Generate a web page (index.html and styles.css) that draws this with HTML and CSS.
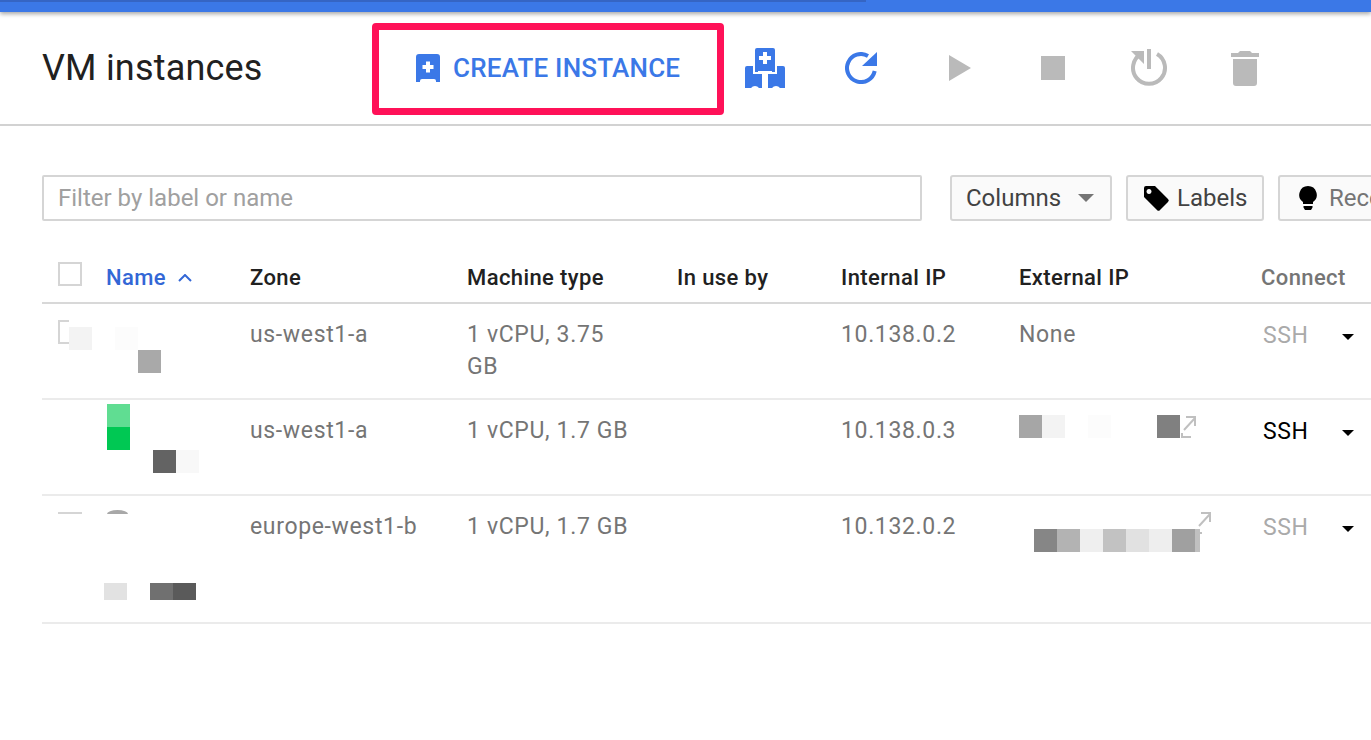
FILE: index.html
```html
<!DOCTYPE html>
<html lang="en">
<head>
    <meta charset="UTF-8">
    <title>VM instances</title>
    <link rel="stylesheet" href="styles.css">
</head>
<body>
    <div class="topbar"><div class="topbar-dark"></div></div>
    <div class="toolbar">
        <h1>VM instances</h1>
        <div class="create-box">
            <svg class="create-icon" viewBox="0 0 24 28"><path fill="#3b78e7" d="M3 0h18a3 3 0 0 1 3 3v25h-4v-1a2 2 0 0 0-2-2H6a2 2 0 0 0-2 2v1H0V3a3 3 0 0 1 3-3z"/><path fill="#fff" d="M10 7.500h4V11h3.500v4H14v3.500h-4V15H6.500v-4H10z"/></svg>
            <span>CREATE INSTANCE</span>
        </div>
        <div class="tools">
            <div class="tool"><svg width="40" height="40" viewBox="0 0 40 40"><path fill="#3b78e7" d="M2 18h6v8h9v14h-3a5 5 0 0 0-8 0H0V20a2 2 0 0 1 2-2zM32 18h6a2 2 0 0 1 2 2v20h-5a5 5 0 0 0-8 0h-4V26h9z"/><path fill="#3b78e7" d="M12 0h16a2 2 0 0 1 2 2v22h-3v-1H13v1h-3V2a2 2 0 0 1 2-2z"/><path fill="#fff" d="M18 4h4v4h4v4h-4v4h-4v-4h-4V8h4z"/></svg></div>
            <div class="tool"><svg width="32" height="32" viewBox="0 0 32 32"><path fill="none" stroke="#3b78e7" stroke-width="4" d="M29.700 19A14 14 0 1 1 23 3.900"/><path fill="#3b78e7" d="M32 0v14H17z"/></svg></div>
            <div class="tool tool-play"><svg width="22" height="26" viewBox="0 0 22 26"><path fill="#bababa" d="M0 0l22 13L0 26z"/></svg></div>
            <div class="tool"><svg width="24" height="24" viewBox="0 0 24 24"><path fill="#bababa" d="M0 0h24v24H0z"/></svg></div>
            <div class="tool"><svg width="38" height="38" viewBox="0 0 38 38"><path fill="none" stroke="#bababa" stroke-width="4" d="M27 5A16 16 0 1 1 11 5"/><path fill="#bababa" d="M17 0h4v20h-4zM1 2h13v13z"/></svg></div>
            <div class="tool"><svg width="28" height="35" viewBox="0 0 28 35"><path fill="#bababa" d="M0 2h7l2-2h10l2 2h7v4H0zM2 8h24v24a3 3 0 0 1-3 3H5a3 3 0 0 1-3-3z"/></svg></div>
        </div>
    </div>

    <div class="filter-row">
        <div class="filter-input">Filter by label or name</div>
        <div class="btn btn-columns">Columns <span class="caret caret-grey"></span></div>
        <div class="btn btn-labels">
            <svg width="28" height="28" viewBox="0 0 28 28"><path d="M2 4a2 2 0 0 1 2-2h9l13 13a2 2 0 0 1 0 3l-8 8a2 2 0 0 1-3 0L2 13zM7 5a2.500 2.500 0 1 0 .01 0z" fill-rule="evenodd"/></svg>
            Labels
        </div>
        <div class="btn btn-rec">
            <svg width="18" height="24" viewBox="0 0 18 24"><path d="M9 0a8.800 8.800 0 0 0-5 16v2h10v-2A8.800 8.800 0 0 0 9 0zM4.500 20h9v1.500l-1.500 2.500H6l-1.500-2.500z"/></svg>
            Recommendations
        </div>
    </div>

    <table class="vm-table">
        <thead>
            <tr>
                <th class="col-check"><span class="checkbox"></span></th>
                <th class="col-name sorted">Name <svg class="sort-icon" width="14" height="8" viewBox="0 0 14 8"><path fill="none" stroke="#3367d6" stroke-width="2" d="M1 7l6-6 6 6"/></svg></th>
                <th class="col-zone">Zone</th>
                <th class="col-type">Machine type</th>
                <th class="col-use">In use by</th>
                <th class="col-int">Internal IP</th>
                <th class="col-ext">External IP</th>
                <th class="col-conn muted">Connect</th>
            </tr>
        </thead>
        <tbody>
            <tr class="row-a">
                <td>
                    <span class="box-part"></span>
                    <div class="strip s1"><i class="g-f3"></i><i></i><i class="g-fc"></i></div>
                    <div class="strip s2"><i class="g-a9"></i></div>
                </td>
                <td></td>
                <td>us-west1-a</td>
                <td>1 vCPU, 3.75<br>GB</td>
                <td></td>
                <td>10.138.0.2</td>
                <td>None</td>
                <td class="ssh off">SSH<span class="caret"></span></td>
            </tr>
            <tr class="row-a">
                <td>
                    <div class="strip s3"><i class="g-green1"></i></div>
                    <div class="strip s4"><i class="g-green2"></i></div>
                    <div class="strip s5"><i class="g-63"></i><i class="g-f8"></i></div>
                </td>
                <td></td>
                <td>us-west1-a</td>
                <td>1 vCPU, 1.7 GB</td>
                <td></td>
                <td>10.138.0.3</td>
                <td>
                    <div class="strip s6"><i class="g-a6"></i><i class="g-f3"></i><i></i><i class="g-fc"></i><i></i><i></i><i class="g-80"></i></div>
                    <svg class="ext-link ext-a" width="15" height="22" viewBox="0 0 15 22"><path fill="none" stroke="#c0c0c0" stroke-width="2" d="M3 14L14 2M5 1h9v9M1 17v4h9"/></svg>
                </td>
                <td class="ssh">SSH<span class="caret"></span></td>
            </tr>
            <tr class="row-b">
                <td>
                    <span class="box-top"></span>
                    <span class="dot-top"></span>
                    <div class="strip s7"><i class="g-e2"></i><i></i><i class="g-70"></i><i class="g-5a"></i></div>
                </td>
                <td></td>
                <td>europe-west1-b</td>
                <td>1 vCPU, 1.7 GB</td>
                <td></td>
                <td>10.132.0.2</td>
                <td>
                    <div class="strip s8"><i class="g-86"></i><i class="g-b3"></i><i class="g-ef"></i><i class="g-c2"></i><i class="g-e1"></i><i class="g-ee"></i><i class="g-a0"></i><i class="g-c0 sliver"></i></div>
                    <svg class="ext-link ext-b" width="15" height="22" viewBox="0 0 15 22"><path fill="none" stroke="#c0c0c0" stroke-width="2" d="M3 14L14 2M5 1h9v9M1 17v4h5"/></svg>
                </td>
                <td class="ssh off">SSH<span class="caret"></span></td>
            </tr>
        </tbody>
    </table>
</body>
</html>
```

FILE: styles.css
```css
html, body {
    margin: 0;
    height: 740px;
    overflow: hidden;
    background: #fff;
    font-family: Roboto, "Liberation Sans", sans-serif;
}
.topbar {
    height: 12px;
    background: #3b78e7;
    box-shadow: 0 2px 4px rgba(0, 0, 0, 0.35);
}
.topbar-dark {
    width: 866px;
    height: 2px;
    background: #3565c4;
}
.toolbar {
    display: flex;
    align-items: center;
    height: 112px;
    padding-left: 42px;
    border-bottom: 2px solid #d2d2d2;
}
h1 {
    width: 330px;
    margin: 0;
    font-size: 36px;
    font-weight: 400;
    letter-spacing: 0.2px;
    color: #212121;
}
.create-box {
    display: flex;
    flex-shrink: 0;
    align-items: center;
    box-sizing: border-box;
    width: 352px;
    height: 92px;
    margin-top: 2px;
    padding: 0 0 2px 37px;
    border: 7px solid #ff1158;
    border-radius: 4px;
    color: #3b78e7;
    font-size: 26px;
    font-weight: 500;
    letter-spacing: 0.2px;
}
.create-icon {
    width: 24px;
    height: 28px;
    margin-right: 13px;
}
.tools {
    display: flex;
    margin-left: -7px;
}
.tool {
    display: flex;
    flex-shrink: 0;
    justify-content: center;
    align-items: center;
    width: 96px;
}
.tool-play {
    padding-left: 6px;
    box-sizing: border-box;
}
.filter-row {
    display: flex;
    margin: 49px 0 0 42px;
    height: 46px;
    font-size: 24px;
}
.filter-input {
    flex-shrink: 0;
    box-sizing: border-box;
    width: 880px;
    margin-right: 28px;
    padding: 0 14px;
    border: 2px solid #d5d5d5;
    border-radius: 2px;
    line-height: 42px;
    color: #a0a0a0;
}
.btn {
    display: flex;
    flex-shrink: 0;
    align-items: center;
    box-sizing: border-box;
    margin-right: 14px;
    border: 2px solid #d5d5d5;
    border-radius: 3px;
    background: #fafafa;
    color: #424242;
}
.btn-columns {
    width: 162px;
    padding-left: 14px;
}
.btn-labels {
    width: 138px;
    padding-left: 14px;
}
.btn-labels svg {
    margin-right: 7px;
}
.btn-rec {
    width: 300px;
    padding-left: 19px;
    color: #757575;
}
.btn-rec svg {
    margin-right: 12px;
}
.caret {
    display: inline-block;
    border-left: 6px solid transparent;
    border-right: 6px solid transparent;
    border-top: 6px solid #000;
}
.caret-grey {
    margin-left: 17px;
    border-left-width: 8px;
    border-right-width: 8px;
    border-top-width: 8px;
    border-top-color: #757575;
}
.vm-table {
    width: 1329px;
    margin: 33px 0 0 42px;
    border-collapse: separate;
    border-spacing: 0;
    table-layout: fixed;
    font-size: 23px;
    letter-spacing: 0.65px;
}
th {
    height: 46px;
    padding: 0 0 2px;
    border-bottom: 2px solid #d8d8d8;
    text-align: left;
    font-size: 22px;
    font-weight: 500;
    letter-spacing: 0.4px;
    color: #212121;
}
td {
    position: relative;
    padding: 15px 0 0;
    border-bottom: 2px solid #ebebeb;
    vertical-align: top;
    line-height: 32px;
    color: #757575;
}
.row-a td {
    height: 79px;
}
.row-b td {
    height: 111px;
}
.col-check { width: 64px; }
.col-name { width: 144px; }
.col-zone { width: 217px; }
.col-type { width: 210px; }
.col-use { width: 164px; }
.col-int { width: 178px; }
.col-ext { width: 242px; }
th.sorted {
    color: #3367d6;
}
th.muted {
    color: #757575;
}
.sort-icon {
    margin: 0 0 3px 6px;
}
.checkbox {
    display: block;
    box-sizing: border-box;
    width: 24px;
    height: 24px;
    margin: 0 0 6px 16px;
    border: 2px solid #d5d5d5;
}
.box-part {
    position: absolute;
    left: 16px;
    top: 16px;
    box-sizing: border-box;
    width: 11px;
    height: 24px;
    border: 2px solid #d5d5d5;
    border-right: 0;
}
.box-top {
    position: absolute;
    left: 16px;
    top: 16px;
    width: 24px;
    height: 2px;
    background: #d5d5d5;
}
.dot-top {
    position: absolute;
    left: 65px;
    top: 14px;
    width: 21px;
    height: 4px;
    border-radius: 50% 50% 0 0 / 100% 100% 0 0;
    background: #a8a8a8;
}
.strip {
    position: absolute;
    display: flex;
}
.strip i {
    display: block;
    width: 23px;
    height: 23px;
}
.strip i.sliver {
    width: 5px;
}
.s1 { left: 27px; top: 23px; }
.s2 { left: 96px; top: 46px; }
.s3 { left: 65px; top: 4px; }
.s4 { left: 65px; top: 27px; }
.s5 { left: 111px; top: 50px; }
.s6 { left: 0; top: 15px; }
.s7 { left: 62px; top: 87px; }
.s7 i { height: 17px; }
.s8 { left: 15px; top: 33px; }
.g-f3 { background: #f3f3f3; }
.g-fc { background: #fcfcfc; }
.g-a9 { background: #a9a9a9; }
.g-green1 { background: #60dd92; }
.g-green2 { background: #00c853; }
.g-63 { background: #636363; }
.g-f8 { background: #f8f8f8; }
.g-a6 { background: #a6a6a6; }
.g-80 { background: #808080; }
.g-e2 { background: #e2e2e2; }
.g-70 { background: #707070; }
.g-5a { background: #5a5a5a; }
.g-86 { background: #868686; }
.g-b3 { background: #b3b3b3; }
.g-ef { background: #efefef; }
.g-c2 { background: #c2c2c2; }
.g-e1 { background: #e1e1e1; }
.g-ee { background: #eeeeee; }
.g-a0 { background: #a0a0a0; }
.g-c0 { background: #c0c0c0; }
.ext-link {
    position: absolute;
}
.ext-a { left: 162px; top: 16px; }
.ext-b { left: 177px; top: 16px; }
.ssh {
    padding-left: 2px;
    line-height: 34px;
    color: #000;
}
.ssh.off {
    color: #aaa;
}
.ssh .caret {
    position: absolute;
    left: 81px;
    top: 30px;
}
```
